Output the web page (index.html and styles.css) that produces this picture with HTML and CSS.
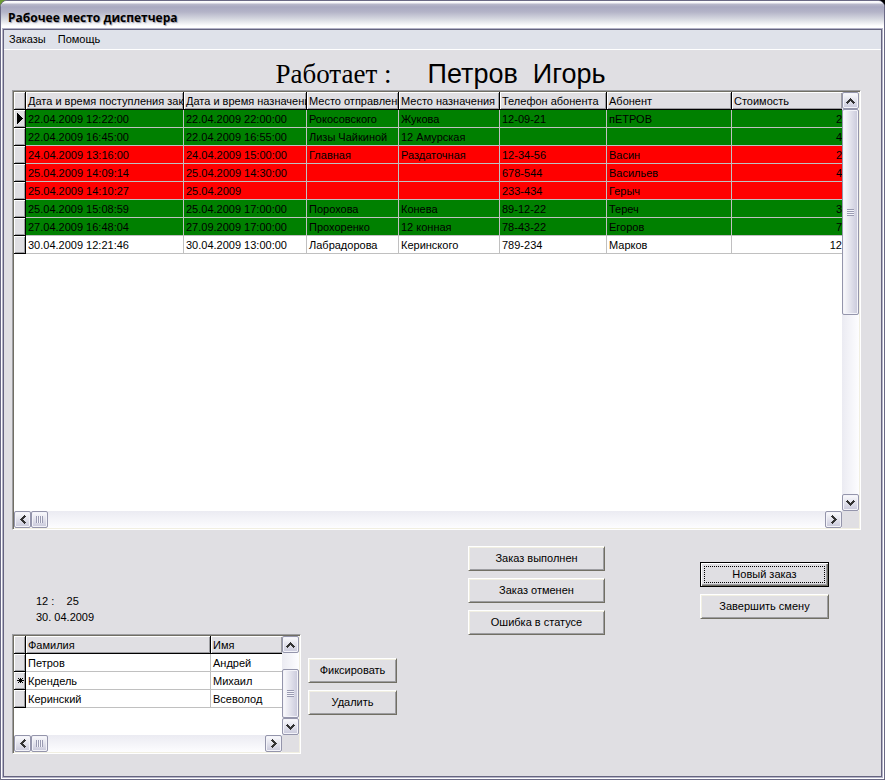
FILE: index.html
```html
<!DOCTYPE html>
<html lang="ru">
<head>
  <meta charset="UTF-8" />
  <meta name="viewport" content="width=device-width, initial-scale=1" />
  <title>Рабочее место диспетчера</title>
  <link rel="stylesheet" href="styles.css">
</head>
<body>
  <svg class="sprite" width="0" height="0" aria-hidden="true">
    <symbol id="up" viewBox="0 0 9 6"><path d="M4 0h1v1h1v1h1v1h1v1h1v1h-1v1h-1v-1h-1v-1h-1v-1h-1v1h-1v1h-1v1h-1v-1h-1v-1h1v-1h1v-1h1v-1h1z" /></symbol>
    <symbol id="down" viewBox="0 0 9 6"><path d="M4 6h1v-1h1v-1h1v-1h1v-1h1v-1h-1v-1h-1v1h-1v1h-1v1h-1v-1h-1v-1h-1v-1h-1v1h-1v1h1v1h1v1h1v1h1z" /></symbol>
    <symbol id="left" viewBox="0 0 6 9"><path d="M0 4v1h1v1h1v1h1v1h1v1h1v-1h1v-1h-1v-1h-1v-1h-1v-1h1v-1h1v-1h1v-1h-1v-1h-1v1h-1v1h-1v1h-1v1z" /></symbol>
    <symbol id="right" viewBox="0 0 6 9"><path d="M6 4v1h-1v1h-1v1h-1v1h-1v1h-1v-1h-1v-1h1v-1h1v-1h1v-1h-1v-1h-1v-1h-1v-1h1v-1h1v1h1v1h1v1h1v1z" /></symbol>
  </svg>

  <div class="window">
    <header class="titlebar">Рабочее место диспетчера</header>
    <div class="frame">
      <div class="client">
        <nav class="menu">
          <a href="#">Заказы</a>
          <a href="#">Помощь</a>
        </nav>

        <h1 class="worker"><span class="worker-label">Работает :</span><span class="worker-name">Петров  Игорь</span></h1>

        <div class="grid orders">
          <div class="grid-view">
            <table>
              <colgroup>
                <col class="c-mark"><col class="c-received"><col class="c-planned"><col class="c-from"><col class="c-to"><col class="c-phone"><col class="c-client"><col>
              </colgroup>
              <thead>
                <tr><th></th><th>Дата и время поступления заказа</th><th>Дата и время назначения</th><th>Место отправления</th><th>Место назначения</th><th>Телефон абонента</th><th>Абонент</th><th>Стоимость</th></tr>
              </thead>
              <tbody>
                <tr class="done"><th><svg width="6" height="11" viewBox="0 0 6 11"><path d="M0 0h1v1h1v1h1v1h1v1h1v1h1v1h-1v1h-1v1h-1v1h-1v1h-1v1h-1z" /></svg></th><td>22.04.2009 12:22:00</td><td>22.04.2009 22:00:00</td><td>Рокосовского</td><td>Жукова</td><td>12-09-21</td><td>пЕТРОВ</td><td class="num">2</td></tr>
                <tr class="done"><th></th><td>22.04.2009 16:45:00</td><td>22.04.2009 16:55:00</td><td>Лизы Чайкиной</td><td>12 Амурская</td><td></td><td></td><td class="num">4</td></tr>
                <tr class="cancelled"><th></th><td>24.04.2009 13:16:00</td><td>24.04.2009 15:00:00</td><td>Главная</td><td>Раздаточная</td><td>12-34-56</td><td>Васин</td><td class="num">2</td></tr>
                <tr class="cancelled"><th></th><td>25.04.2009 14:09:14</td><td>25.04.2009 14:30:00</td><td></td><td></td><td>678-544</td><td>Васильев</td><td class="num">4</td></tr>
                <tr class="cancelled"><th></th><td>25.04.2009 14:10:27</td><td>25.04.2009</td><td></td><td></td><td>233-434</td><td>Герыч</td><td class="num"></td></tr>
                <tr class="done"><th></th><td>25.04.2009 15:08:59</td><td>25.04.2009 17:00:00</td><td>Порохова</td><td>Конева</td><td>89-12-22</td><td>Тереч</td><td class="num">3</td></tr>
                <tr class="done"><th></th><td>27.04.2009 16:48:04</td><td>27.09.2009 17:00:00</td><td>Прохоренко</td><td>12 конная</td><td>78-43-22</td><td>Егоров</td><td class="num">7</td></tr>
                <tr><th></th><td>30.04.2009 12:21:46</td><td>30.04.2009 13:00:00</td><td>Лабрадорова</td><td>Керинского</td><td>789-234</td><td>Марков</td><td class="num">12</td></tr>
              </tbody>
            </table>
          </div>
          <div class="vscroll">
            <button class="arrow" aria-label="Вверх"><svg width="9" height="6"><use href="#up" /></svg></button>
            <div class="thumb"></div>
            <button class="arrow last" aria-label="Вниз"><svg width="9" height="6"><use href="#down" /></svg></button>
          </div>
          <div class="hscroll">
            <button class="arrow" aria-label="Влево"><svg width="6" height="9"><use href="#left" /></svg></button>
            <div class="thumb"></div>
            <button class="arrow last" aria-label="Вправо"><svg width="6" height="9"><use href="#right" /></svg></button>
          </div>
        </div>

        <div class="bottom">
          <div class="staff">
            <div class="clock">12 :    25
30. 04.2009</div>
            <div class="grid drivers">
              <div class="grid-view">
                <table>
                  <colgroup><col class="c-mark"><col class="c-surname"><col></colgroup>
                  <thead>
                    <tr><th></th><th>Фамилия</th><th>Имя</th></tr>
                  </thead>
                  <tbody>
                    <tr><th></th><td>Петров</td><td>Андрей</td></tr>
                    <tr><th><svg width="7" height="7" viewBox="0 0 7 7"><path d="M3 1h1v5h-1zM0 3h7v1h-7zM1 1h1v1h-1zM5 1h1v1h-1zM2 2h3v3h-3zM1 5h1v1h-1zM5 5h1v1h-1z" /></svg></th><td>Крендель</td><td>Михаил</td></tr>
                    <tr><th></th><td>Керинский</td><td>Всеволод</td></tr>
                  </tbody>
                </table>
              </div>
              <div class="vscroll">
                <button class="arrow" aria-label="Вверх"><svg width="9" height="6"><use href="#up" /></svg></button>
                <div class="thumb"></div>
                <button class="arrow" aria-label="Вниз"><svg width="9" height="6"><use href="#down" /></svg></button>
              </div>
              <div class="hscroll">
                <button class="arrow" aria-label="Влево"><svg width="6" height="9"><use href="#left" /></svg></button>
                <div class="thumb"></div>
                <button class="arrow last" aria-label="Вправо"><svg width="6" height="9"><use href="#right" /></svg></button>
              </div>
            </div>
          </div>
          <div class="buttons staff-buttons">
            <button class="btn">Фиксировать</button>
            <button class="btn">Удалить</button>
          </div>
          <div class="buttons status-buttons">
            <button class="btn">Заказ выполнен</button>
            <button class="btn">Заказ отменен</button>
            <button class="btn">Ошибка в статусе</button>
          </div>
          <div class="buttons shift-buttons">
            <button class="btn default">Новый заказ</button>
            <button class="btn">Завершить смену</button>
          </div>
        </div>
      </div>
    </div>
  </div>
</body>
</html>
```
FILE: styles.css
```css
* {
  box-sizing: border-box;
}
html {
  background: linear-gradient(90deg, #6a9a32 50%, #000 50%);
}
body {
  margin: 0;
  font-family: "Liberation Sans", Arial, sans-serif;
  font-size: 11px;
  line-height: 16px;
  color: #000;
}
.sprite {
  position: absolute;
}
.window {
  display: flex;
  flex-direction: column;
  min-height: 100vh;
  padding-bottom: 1px;
  border: 1px solid #6a6985;
  border-radius: 7px 7px 0 0;
  background: #fff;
  overflow: hidden;
}
.titlebar {
  height: 27px;
  padding: 5px 7px 0;
  background: linear-gradient(#fff 0, #f4f4f8 2px, #b9b9cb 3px, #a9a9c1 6px, #b4b4c8 11px, #d6d8e0 18px, #fff 25px);
  font-family: "Open Sans", sans-serif;
  font-size: 12px;
  font-weight: bold;
  line-height: 24px;
  text-shadow: 1px 1px 1px #9a9aac;
}
.frame {
  flex: 1;
  display: flex;
  margin: 0 1px;
  border: 1px solid #b4b3c8;
}
.client {
  flex: 1;
  display: flex;
  flex-direction: column;
  min-width: 0;
  border: 1px solid #65647f;
  background: #e0dfe3;
}
.menu {
  display: flex;
  gap: 12px;
  height: 20px;
  padding: 1px 5px;
  background: #dfe2ea;
  border-bottom: 1px solid #fff;
}
.menu a {
  color: #000;
  text-decoration: none;
}
.worker {
  display: flex;
  justify-content: center;
  align-items: baseline;
  gap: 36px;
  height: 40px;
  margin: 0;
  padding-right: 4px;
  font-weight: normal;
  line-height: 48px;
  white-space: pre;
}
.worker-label {
  font-family: "Liberation Serif", "Times New Roman", serif;
  font-size: 27px;
}
.worker-name {
  font-size: 27px;
}

/* grids */
.grid {
  display: grid;
  grid-template-columns: 1fr 17px;
  grid-template-rows: 1fr 17px;
  border: 1px solid;
  border-color: #9d9da1 #fff #fff #9d9da1;
  box-shadow: inset 1px 1px #716f64, inset -1px -1px #f1efe2;
  padding: 1px;
}
.orders {
  flex: 1;
  margin: 0 20px 0 8px;
}
.drivers {
  height: 120px;
}
.grid-view {
  min-width: 0;
  background: #fff;
  overflow: hidden;
}
table {
  width: 100%;
  table-layout: fixed;
  border-collapse: separate;
  border-spacing: 0;
}
th, td {
  height: 18px;
  padding: 1px 0 0 2px;
  border: solid #c0c0c0;
  border-width: 0 1px 1px 0;
  font-weight: normal;
  line-height: 16px;
  text-align: left;
  white-space: nowrap;
  overflow: hidden;
}
th {
  border-color: #000;
  background: #e0dfe3;
  box-shadow: inset 1px 1px #fff, inset -1px -1px #9d9da1;
}
tr > :last-child {
  border-right: 0;
}
tbody th {
  padding: 0 0 0 3px;
}
th svg {
  display: block;
}
.done td {
  background: #008000;
}
.cancelled td {
  background: #f00;
}
td.num {
  text-align: right;
}
.c-mark { width: 12px; }
.c-received { width: 158px; }
.c-planned { width: 123px; }
.c-from { width: 92px; }
.c-to { width: 101px; }
.c-phone { width: 107px; }
.c-client { width: 125px; }
.c-surname { width: 185px; }

/* scrollbars */
.vscroll, .hscroll {
  display: flex;
}
.vscroll {
  flex-direction: column;
  background: linear-gradient(90deg, #ebebf2, #fdfdff);
}
.hscroll {
  background: linear-gradient(#ebebf2, #fdfdff);
}
.arrow, .thumb {
  display: flex;
  align-items: center;
  justify-content: center;
  flex: none;
  width: 17px;
  height: 17px;
  padding: 0;
  border: 1px solid #9495ab;
  border-radius: 2px;
  box-shadow: inset 0 0 0 1px #f3f3f9;
  background: linear-gradient(#fbfbfd, #c9c9db);
}
.arrow svg {
  fill: #333;
}
.vscroll .last {
  margin-top: auto;
}
.hscroll .last {
  margin-left: auto;
}
.vscroll .thumb {
  height: 206px;
  background: linear-gradient(90deg, #fbfbfd, #c9c9db);
}
.drivers .vscroll .thumb {
  height: 49px;
  margin-top: auto;
}
.thumb::before {
  content: "";
  width: 7px;
  height: 7px;
  background: repeating-linear-gradient(90deg, #9a9bb2 0 1px, #f4f4fa 1px 2px);
}
.vscroll .thumb::before {
  background: repeating-linear-gradient(#9a9bb2 0 1px, #f4f4fa 1px 2px);
}

/* lower part */
.bottom {
  display: flex;
  align-items: flex-start;
  padding: 0 20px 22px 8px;
}
.staff {
  width: 289px;
}
.clock {
  padding: 63px 0 9px 24px;
  white-space: pre;
}
.buttons {
  display: flex;
  flex-direction: column;
  gap: 7px;
}
.staff-buttons {
  width: 89px;
  margin: 128px 0 0 7px;
}
.status-buttons {
  width: 137px;
  margin: 16px 0 0 71px;
}
.shift-buttons {
  width: 129px;
  margin: 32px 0 0 95px;
}
.btn {
  height: 25px;
  padding: 0 0 2px;
  border: 1px solid;
  border-color: #fff #716f64 #716f64 #fff;
  box-shadow: inset 1px 1px #f1efe2, inset -1px -1px #9d9da1;
  background: #e0dfe3;
  color: #000;
  font: inherit;
}
.btn.default {
  border-color: #000;
  box-shadow: inset 1px 1px #fff, inset -1px -1px #716f64, inset -2px -2px #9d9da1;
  outline: 1px dotted #000;
  outline-offset: -5px;
}
```
